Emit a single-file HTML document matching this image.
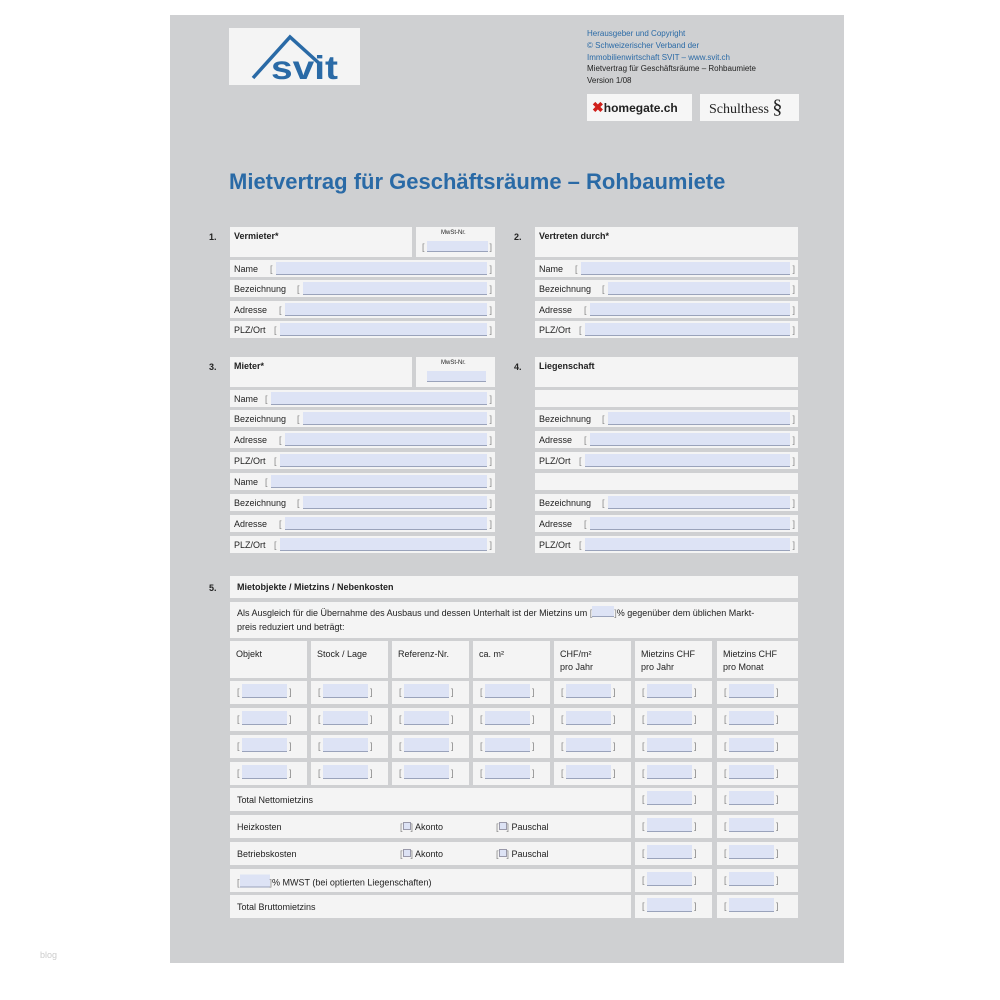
<!DOCTYPE html>
<html><head><meta charset="utf-8"><style>
body{margin:0;background:#fff;font-family:"Liberation Sans",sans-serif;color:#222}
#pg{position:absolute;left:170px;top:15px;width:674px;height:948px;background:#cfd0d2}
.c{position:absolute;background:#f4f4f4;font-size:9px;box-sizing:border-box}
.l{position:absolute;left:4px;top:50%;transform:translateY(-50%);white-space:nowrap}
.fl{position:absolute;top:2px;bottom:2px;background:#dde3f5;border-bottom:1px solid #9aa3bb}
.bk{position:absolute;top:50%;transform:translateY(-50%);color:#888;font-size:9px}
.n{position:absolute;font-size:9px;font-weight:bold}
.h{font-weight:bold}
.t{position:absolute;left:6px;top:7px;font-size:9px;line-height:13px}
</style></head><body>
<div id="pg"></div>
<!-- logos -->
<div style="position:absolute;left:229px;top:28px;width:131px;height:57px;background:#f4f4f4"></div>
<svg style="position:absolute;left:229px;top:28px" width="131" height="57"><path d="M24 50 L61 9 L92 37" fill="none" stroke="#2a6aa6" stroke-width="3.5"/><text x="42" y="51" font-family="Liberation Sans" font-weight="bold" font-size="33" textLength="67" lengthAdjust="spacingAndGlyphs" fill="#2a6aa6">svit</text></svg>
<div style="position:absolute;left:587px;top:28px;font-size:8px;line-height:11.8px;color:#2a6aa6">Herausgeber und Copyright<br>© Schweizerischer Verband der<br>Immobilienwirtschaft SVIT – www.svit.ch<br><span style="color:#222">Mietvertrag für Geschäftsräume – Rohbaumiete<br>Version 1/08</span></div>
<div style="position:absolute;left:587px;top:94px;width:105px;height:27px;background:#f6f6f6;font-size:12px;font-weight:bold;line-height:27px;padding-left:5px;box-sizing:border-box"><span style="color:#d0201b;font-size:14px">✖</span>homegate.ch</div>
<div style="position:absolute;left:700px;top:94px;width:99px;height:27px;background:#f6f6f6;font-family:'Liberation Serif',serif;font-size:14px;line-height:27px;padding-left:9px;box-sizing:border-box">Schulthess <span style="font-size:20px">§</span></div>
<div style="position:absolute;left:229px;top:169px;font-size:22px;font-weight:bold;color:#2a6aa6">Mietvertrag für Geschäftsräume – Rohbaumiete</div>

<!-- section 1 -->
<div class="n" style="left:209px;top:232px">1.</div>
<div class="c" style="left:230px;top:227px;width:182px;height:30px"><span class="h" style="position:absolute;left:4px;top:4px">Vermieter*</span></div>
<div class="c" style="left:416px;top:227px;width:79px;height:30px"><span style="position:absolute;left:25px;top:3px;font-size:6px">MwSt-Nr.</span><span class="bk" style="left:6px;top:20px">[</span><div class="fl" style="left:11px;right:7px;top:14px;bottom:5px"></div><span class="bk" style="right:3px;top:20px">]</span></div>
<div class="n" style="left:514px;top:232px">2.</div>
<div class="c" style="left:535px;top:227px;width:263px;height:30px"><span class="h" style="position:absolute;left:4px;top:4px">Vertreten durch*</span></div>

<div class="c" style="left:230px;top:260px;width:265px;height:17px"><span class="l">Name</span><span class="bk" style="left:40px">[</span><div class="fl" style="left:46px;right:8px"></div><span class="bk" style="right:3px">]</span></div>
<div class="c" style="left:230px;top:280px;width:265px;height:17px"><span class="l">Bezeichnung</span><span class="bk" style="left:67px">[</span><div class="fl" style="left:73px;right:8px"></div><span class="bk" style="right:3px">]</span></div>
<div class="c" style="left:230px;top:301px;width:265px;height:17px"><span class="l">Adresse</span><span class="bk" style="left:49px">[</span><div class="fl" style="left:55px;right:8px"></div><span class="bk" style="right:3px">]</span></div>
<div class="c" style="left:230px;top:321px;width:265px;height:17px"><span class="l">PLZ/Ort</span><span class="bk" style="left:44px">[</span><div class="fl" style="left:50px;right:8px"></div><span class="bk" style="right:3px">]</span></div>
<div class="c" style="left:535px;top:260px;width:263px;height:17px"><span class="l">Name</span><span class="bk" style="left:40px">[</span><div class="fl" style="left:46px;right:8px"></div><span class="bk" style="right:3px">]</span></div>
<div class="c" style="left:535px;top:280px;width:263px;height:17px"><span class="l">Bezeichnung</span><span class="bk" style="left:67px">[</span><div class="fl" style="left:73px;right:8px"></div><span class="bk" style="right:3px">]</span></div>
<div class="c" style="left:535px;top:301px;width:263px;height:17px"><span class="l">Adresse</span><span class="bk" style="left:49px">[</span><div class="fl" style="left:55px;right:8px"></div><span class="bk" style="right:3px">]</span></div>
<div class="c" style="left:535px;top:321px;width:263px;height:17px"><span class="l">PLZ/Ort</span><span class="bk" style="left:44px">[</span><div class="fl" style="left:50px;right:8px"></div><span class="bk" style="right:3px">]</span></div>

<!-- section 3/4 -->
<div class="n" style="left:209px;top:362px">3.</div>
<div class="c" style="left:230px;top:357px;width:182px;height:30px"><span class="h" style="position:absolute;left:4px;top:4px">Mieter*</span></div>
<div class="c" style="left:416px;top:357px;width:79px;height:30px"><span style="position:absolute;left:25px;top:3px;font-size:6px">MwSt-Nr.</span><div class="fl" style="left:11px;right:9px;top:14px;bottom:5px"></div></div>
<div class="n" style="left:514px;top:362px">4.</div>
<div class="c" style="left:535px;top:357px;width:263px;height:30px"><span class="h" style="position:absolute;left:4px;top:4px">Liegenschaft</span></div>

<div class="c" style="left:230px;top:390px;width:265px;height:17px"><span class="l">Name</span><span class="bk" style="left:35px">[</span><div class="fl" style="left:41px;right:8px"></div><span class="bk" style="right:3px">]</span></div>
<div class="c" style="left:230px;top:410px;width:265px;height:17px"><span class="l">Bezeichnung</span><span class="bk" style="left:67px">[</span><div class="fl" style="left:73px;right:8px"></div><span class="bk" style="right:3px">]</span></div>
<div class="c" style="left:230px;top:431px;width:265px;height:17px"><span class="l">Adresse</span><span class="bk" style="left:49px">[</span><div class="fl" style="left:55px;right:8px"></div><span class="bk" style="right:3px">]</span></div>
<div class="c" style="left:230px;top:452px;width:265px;height:17px"><span class="l">PLZ/Ort</span><span class="bk" style="left:44px">[</span><div class="fl" style="left:50px;right:8px"></div><span class="bk" style="right:3px">]</span></div>
<div class="c" style="left:230px;top:473px;width:265px;height:17px"><span class="l">Name</span><span class="bk" style="left:35px">[</span><div class="fl" style="left:41px;right:8px"></div><span class="bk" style="right:3px">]</span></div>
<div class="c" style="left:230px;top:494px;width:265px;height:17px"><span class="l">Bezeichnung</span><span class="bk" style="left:67px">[</span><div class="fl" style="left:73px;right:8px"></div><span class="bk" style="right:3px">]</span></div>
<div class="c" style="left:230px;top:515px;width:265px;height:17px"><span class="l">Adresse</span><span class="bk" style="left:49px">[</span><div class="fl" style="left:55px;right:8px"></div><span class="bk" style="right:3px">]</span></div>
<div class="c" style="left:230px;top:536px;width:265px;height:17px"><span class="l">PLZ/Ort</span><span class="bk" style="left:44px">[</span><div class="fl" style="left:50px;right:8px"></div><span class="bk" style="right:3px">]</span></div>

<div class="c" style="left:535px;top:390px;width:263px;height:17px"></div>
<div class="c" style="left:535px;top:410px;width:263px;height:17px"><span class="l">Bezeichnung</span><span class="bk" style="left:67px">[</span><div class="fl" style="left:73px;right:8px"></div><span class="bk" style="right:3px">]</span></div>
<div class="c" style="left:535px;top:431px;width:263px;height:17px"><span class="l">Adresse</span><span class="bk" style="left:49px">[</span><div class="fl" style="left:55px;right:8px"></div><span class="bk" style="right:3px">]</span></div>
<div class="c" style="left:535px;top:452px;width:263px;height:17px"><span class="l">PLZ/Ort</span><span class="bk" style="left:44px">[</span><div class="fl" style="left:50px;right:8px"></div><span class="bk" style="right:3px">]</span></div>
<div class="c" style="left:535px;top:473px;width:263px;height:17px"></div>
<div class="c" style="left:535px;top:494px;width:263px;height:17px"><span class="l">Bezeichnung</span><span class="bk" style="left:67px">[</span><div class="fl" style="left:73px;right:8px"></div><span class="bk" style="right:3px">]</span></div>
<div class="c" style="left:535px;top:515px;width:263px;height:17px"><span class="l">Adresse</span><span class="bk" style="left:49px">[</span><div class="fl" style="left:55px;right:8px"></div><span class="bk" style="right:3px">]</span></div>
<div class="c" style="left:535px;top:536px;width:263px;height:17px"><span class="l">PLZ/Ort</span><span class="bk" style="left:44px">[</span><div class="fl" style="left:50px;right:8px"></div><span class="bk" style="right:3px">]</span></div>

<!-- section 5 -->
<div class="n" style="left:209px;top:583px">5.</div>
<div class="c" style="left:230px;top:576px;width:568px;height:22px"><span class="l h" style="left:7px">Mietobjekte / Mietzins / Nebenkosten</span></div>
<div class="c" style="left:230px;top:602px;width:568px;height:36px"><div style="position:absolute;left:7px;top:4px;font-size:9px;line-height:13.5px">Als Ausgleich für die Übernahme des Ausbaus und dessen Unterhalt ist der Mietzins um <span style="color:#888">[</span><span style="display:inline-block;width:22px;height:10px;background:#dde3f5;border-bottom:1px solid #9aa3bb;vertical-align:-1px"></span><span style="color:#888">]</span>% gegenüber dem üblichen Markt-<br>preis reduziert und beträgt:</div></div>

<div class="c" style="left:230px;top:641px;width:77px;height:37px"><span class="t">Objekt</span></div>
<div class="c" style="left:311px;top:641px;width:77px;height:37px"><span class="t">Stock / Lage</span></div>
<div class="c" style="left:392px;top:641px;width:77px;height:37px"><span class="t">Referenz-Nr.</span></div>
<div class="c" style="left:473px;top:641px;width:77px;height:37px"><span class="t">ca. m²</span></div>
<div class="c" style="left:554px;top:641px;width:77px;height:37px"><span class="t">CHF/m²<br>pro Jahr</span></div>
<div class="c" style="left:635px;top:641px;width:77px;height:37px"><span class="t">Mietzins CHF<br>pro Jahr</span></div>
<div class="c" style="left:717px;top:641px;width:81px;height:37px"><span class="t">Mietzins CHF<br>pro Monat</span></div>

<style>.s{position:absolute;width:77px;height:23px;background:#f4f4f4}.s:before{content:"[";position:absolute;left:7px;top:6px;font-size:9px;color:#888}.s:after{content:"]";position:absolute;left:59px;top:6px;font-size:9px;color:#888}.s i{position:absolute;left:12px;width:45px;top:3px;height:13px;background:#dde3f5;border-bottom:1px solid #9aa3bb}</style>
<div style="position:absolute;left:0;top:681px">
<div class="s" style="left:230px;top:0"><i></i></div><div class="s" style="left:311px;top:0"><i></i></div><div class="s" style="left:392px;top:0"><i></i></div><div class="s" style="left:473px;top:0"><i></i></div><div class="s" style="left:554px;top:0"><i></i></div><div class="s" style="left:635px;top:0"><i></i></div><div class="s" style="left:717px;top:0;width:81px"><i></i></div>
</div>
<div style="position:absolute;left:0;top:708px">
<div class="s" style="left:230px;top:0"><i></i></div><div class="s" style="left:311px;top:0"><i></i></div><div class="s" style="left:392px;top:0"><i></i></div><div class="s" style="left:473px;top:0"><i></i></div><div class="s" style="left:554px;top:0"><i></i></div><div class="s" style="left:635px;top:0"><i></i></div><div class="s" style="left:717px;top:0;width:81px"><i></i></div>
</div>
<div style="position:absolute;left:0;top:735px">
<div class="s" style="left:230px;top:0"><i></i></div><div class="s" style="left:311px;top:0"><i></i></div><div class="s" style="left:392px;top:0"><i></i></div><div class="s" style="left:473px;top:0"><i></i></div><div class="s" style="left:554px;top:0"><i></i></div><div class="s" style="left:635px;top:0"><i></i></div><div class="s" style="left:717px;top:0;width:81px"><i></i></div>
</div>
<div style="position:absolute;left:0;top:762px">
<div class="s" style="left:230px;top:0"><i></i></div><div class="s" style="left:311px;top:0"><i></i></div><div class="s" style="left:392px;top:0"><i></i></div><div class="s" style="left:473px;top:0"><i></i></div><div class="s" style="left:554px;top:0"><i></i></div><div class="s" style="left:635px;top:0"><i></i></div><div class="s" style="left:717px;top:0;width:81px"><i></i></div>
</div>

<div class="c" style="left:230px;top:788px;width:401px;height:23px"><span class="l" style="left:7px">Total Nettomietzins</span></div>
<div class="s" style="left:635px;top:788px"><i></i></div><div class="s" style="left:717px;top:788px;width:81px"><i></i></div>
<div class="c" style="left:230px;top:815px;width:401px;height:23px"><span class="l" style="left:7px">Heizkosten</span><span class="l" style="left:170px"><span style="color:#888">[</span><span style="display:inline-block;width:6px;height:6px;border:1px solid #99a;background:#dde3f5"></span><span style="color:#888">]</span> Akonto</span><span class="l" style="left:266px"><span style="color:#888">[</span><span style="display:inline-block;width:6px;height:6px;border:1px solid #99a;background:#dde3f5"></span><span style="color:#888">]</span> Pauschal</span></div>
<div class="s" style="left:635px;top:815px"><i></i></div><div class="s" style="left:717px;top:815px;width:81px"><i></i></div>
<div class="c" style="left:230px;top:842px;width:401px;height:23px"><span class="l" style="left:7px">Betriebskosten</span><span class="l" style="left:170px"><span style="color:#888">[</span><span style="display:inline-block;width:6px;height:6px;border:1px solid #99a;background:#dde3f5"></span><span style="color:#888">]</span> Akonto</span><span class="l" style="left:266px"><span style="color:#888">[</span><span style="display:inline-block;width:6px;height:6px;border:1px solid #99a;background:#dde3f5"></span><span style="color:#888">]</span> Pauschal</span></div>
<div class="s" style="left:635px;top:842px"><i></i></div><div class="s" style="left:717px;top:842px;width:81px"><i></i></div>
<div class="c" style="left:230px;top:869px;width:401px;height:23px"><span class="l" style="left:7px"><span style="color:#888">[</span><span style="display:inline-block;width:30px;height:12px;background:#dde3f5;border-bottom:1px solid #9aa3bb;vertical-align:-2px"></span><span style="color:#888">]</span>% MWST (bei optierten Liegenschaften)</span></div>
<div class="s" style="left:635px;top:869px"><i></i></div><div class="s" style="left:717px;top:869px;width:81px"><i></i></div>
<div class="c" style="left:230px;top:895px;width:401px;height:23px"><span class="l" style="left:7px">Total Bruttomietzins</span></div>
<div class="s" style="left:635px;top:895px"><i></i></div><div class="s" style="left:717px;top:895px;width:81px"><i></i></div>

<div style="position:absolute;left:40px;top:950px;font-size:9px;color:#ccc">blog</div>
</body></html>
